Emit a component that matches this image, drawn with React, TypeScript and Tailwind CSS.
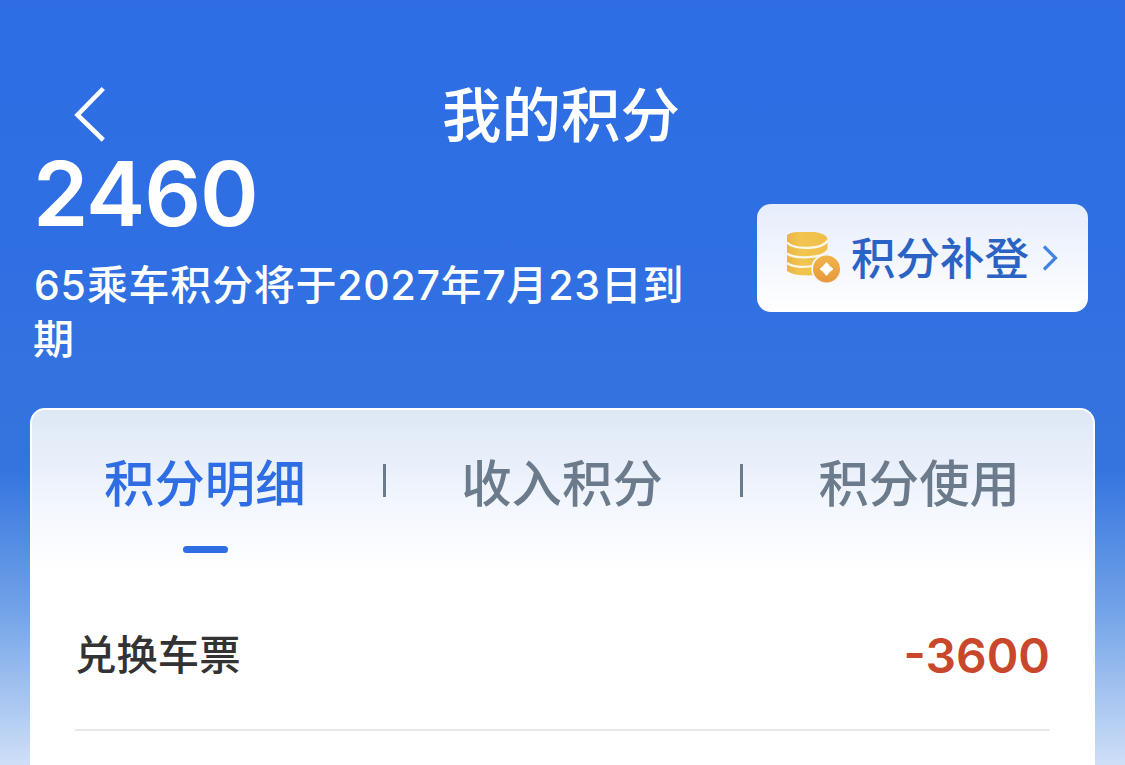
const font = "font-['Inter','Noto_Sans_CJK_SC',sans-serif]";

function Coins() {
  return (
    <svg width="56" height="54" viewBox="0 0 56 54" className="shrink-0">
      <defs>
        <linearGradient id="stack" x1="0" y1="0" x2="1" y2="0">
          <stop offset="0" stopColor="#e9b545" />
          <stop offset="0.35" stopColor="#f1c550" />
          <stop offset="1" stopColor="#efbf4a" />
        </linearGradient>
        <linearGradient id="coin" x1="0" y1="0" x2="0" y2="1">
          <stop offset="0" stopColor="#efb449" />
          <stop offset="1" stopColor="#e9983b" />
        </linearGradient>
      </defs>
      <path fill="url(#stack)" d="M1 4Q5 1 12 1H29Q41 3 41.5 8V37Q39 44 23 44.5Q7 44.5 1 40Z" />
      <g fill="none" stroke="#fdf7e8" strokeWidth="2.3">
        <path d="M1 11.5C8 19 37 19 42 9" />
        <path d="M1 22.5C8 28 37 28 42 19" />
        <path d="M1 32C7 36.5 20 37 30 34" />
      </g>
      <circle cx="40.5" cy="38" r="15.3" fill="#f6f6fd" />
      <path d="M38 21H43V29H38Z" fill="#f0f3fd" />
      <circle cx="40.5" cy="38" r="13.5" fill="url(#coin)" />
      <path d="M40.5 31.5Q43 35.5 47 38Q43 40.5 40.5 44.5Q38 40.5 34 38Q38 35.5 40.5 31.5Z" fill="#fff" stroke="#fff" strokeWidth="1" />
    </svg>
  );
}

export default function App() {
  return (
    <main className={`flex h-[765px] w-[1125px] flex-col overflow-hidden bg-[linear-gradient(180deg,#2e6de3_0px,#2f6fe3_260px,#3473df_390px,#3474df_468px,#72a3e8_610px,#cfdff7_765px)] font-medium ${font}`}>
      <header className="mt-[78px] mb-[2px] grid h-[70px] grid-cols-3 items-center px-[74px]">
        <svg width="34" height="58" viewBox="0 0 34 58" fill="none" stroke="#fff" strokeWidth="4.6"><path d="M29.3 3.5L3.5 30L29.3 55" /></svg>
        <h1 className="pt-[2px] pr-[3px] text-center text-[59.5px] leading-[70px] whitespace-nowrap">
          <span className="text-white">我的积分</span>
        </h1>
      </header>
      <section className="flex h-[258px] justify-between pr-[37px] pl-[34px] text-white">
        <div className="w-[670px]">
          <div className="-ml-[1px] h-[100px] text-[89px] leading-[88px] font-semibold tracking-[-1.1px]">2460</div>
          <p className="mt-[8px] text-[41px] leading-[54px] tracking-[0.75px]">65乘车积分将于2027年7月23日到<br /><span className="-ml-px">期</span></p>
        </div>
        <button className="mt-[54px] flex h-[108px] w-[331px] items-center rounded-[14px] bg-linear-to-b from-[#e6edfb] to-white pl-[29px] text-[#2b63c5]">
          <Coins />
          <span className="ml-[9px] pt-[2px] text-[44.5px] leading-[60px] whitespace-nowrap">积分补登</span>
          <svg width="17" height="28" viewBox="0 0 17 28" className="ml-[13px]" fill="none" stroke="#4283e2" strokeWidth="3.2"><path d="M2 2.5L13.5 14L2 25.5" /></svg>
        </button>
      </section>
      <section className="mx-[30px] h-[357px] rounded-t-[15px] border-2 border-b-0 border-white bg-[linear-gradient(180deg,#dde8f5_0px,#e8effa_50px,#f5f8fe_105px,#fff_165px)]">
        <nav className="flex h-[175px] justify-between pr-[73px] pl-[72px] pt-[39px] text-[50.4px] leading-[70px] text-[#6b7b8c]">
          <div className="flex flex-col items-center text-[#2e6de3]"><span>积分明细</span><i className="mt-[27px] ml-[2px] h-[7px] w-[45px] rounded-full bg-[#2e6de3]" /></div>
          <i className="mt-[15px] -mr-px ml-px h-[33px] w-[3px] bg-[#6b7b8c]" />
          <span>收入积分</span>
          <i className="mt-[15px] -mr-px ml-px h-[33px] w-[3px] bg-[#6b7b8c]" />
          <span>积分使用</span>
        </nav>
        <div className="mx-[43px] flex h-[146px] items-center justify-between border-b-2 border-[#e8e8e8]">
          <span className="pb-[3px] text-[41.4px] text-[#333]">兑换车票</span>
          <strong className="pb-[3px] text-[48px] font-semibold text-[#c9472b]">-3600</strong>
        </div>
      </section>
    </main>
  );
}
